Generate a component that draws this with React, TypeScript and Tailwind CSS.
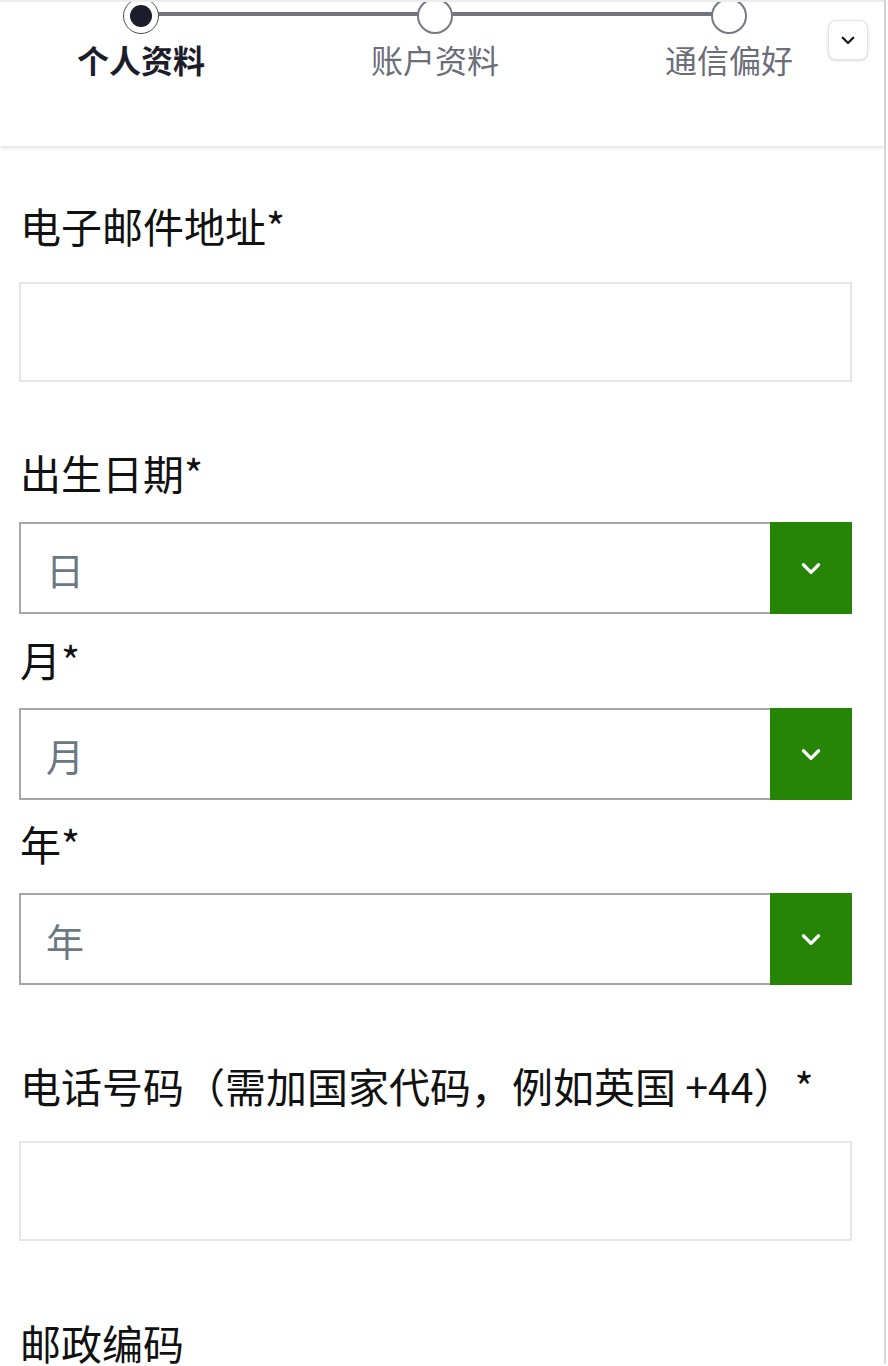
import React from 'react';

const steps = [
  { label: '个人资料', active: true },
  { label: '账户资料', active: false },
  { label: '通信偏好', active: false },
];

function Chevron({ className }: { className?: string }) {
  return (
    <svg viewBox="0 0 24 24" className={className} fill="none" stroke="currentColor" strokeWidth={3} strokeLinecap="round" strokeLinejoin="round">
      <path d="M5 9l7 7 7-7" />
    </svg>
  );
}

function Stepper() {
  return (
    <div className="relative h-[148px] bg-white shadow-[0_2px_4px_rgba(0,0,0,0.12)] z-10">
      <div className="relative ml-[-6px] w-[882px] -mt-[2px]">
        <div className="absolute left-[147px] top-[14px] h-[4px] w-[589px] bg-[#737480]" />
        <div className="grid grid-cols-3">
          {steps.map((s) => (
            <div key={s.label} className="relative flex flex-col items-center">
              {s.active ? (
                <div className="flex h-[36px] w-[36px] items-center justify-center rounded-full border-[1.5px] border-[#4a4b55] bg-white">
                  <div className="h-[22px] w-[22px] rounded-full bg-[#1c1d2b]" />
                </div>
              ) : (
                <div className="h-[36px] w-[36px] rounded-full border-2 border-[#767885] bg-white" />
              )}
              <div
                className={
                  'mt-[1px] text-[32px] leading-[48px] ' +
                  (s.active ? 'font-bold text-[#1c1d2b]' : 'text-[#6b6d79]')
                }
              >
                {s.label}
              </div>
            </div>
          ))}
        </div>
      </div>
      <button className="absolute left-[828px] top-[22px] flex h-[40px] w-[40px] items-center justify-center rounded-[8px] border border-[#e4e4e4] bg-white shadow-[0_1px_3px_rgba(0,0,0,0.15)]">
        <Chevron className="h-[18px] w-[18px] text-[#111]" />
      </button>
    </div>
  );
}

function Label({ text, className }: { text: string; className?: string }) {
  return <div className={'text-[41px] leading-[48px] text-[#111] ' + (className ?? '')}>{text}</div>;
}

function TextInput({ className }: { className?: string }) {
  return <div className={'h-[100px] w-[833px] border-2 border-[#e6e6ea] bg-white ' + (className ?? '')} />;
}

function Select({ placeholder, className }: { placeholder: string; className?: string }) {
  return (
    <div className={'flex h-[92px] w-[833px] ' + (className ?? '')}>
      <div className="flex flex-1 items-center border-2 border-r-0 border-[#a6a6a6] pl-[25px] text-[38px] text-[#6c7784]">
        {placeholder}
      </div>
      <div className="flex w-[82px] items-center justify-center bg-[#268506]">
        <Chevron className="h-[26px] w-[26px] text-white" />
      </div>
    </div>
  );
}

export default function App() {
  return (
    <div
      className="relative h-[1366px] w-[888px] overflow-hidden bg-white"
      style={{ fontFamily: '"Noto Sans CJK SC", "Noto Sans", sans-serif' }}
    >
      <div className="h-[1366px] w-[886px] border-r-2 border-[#dadada]">
        <div className="relative">
          <div className="absolute left-0 top-0 z-20 h-[4px] w-full bg-[#ececec]" />
          <Stepper />
        </div>
        <div className="flex flex-col pl-[19px]">
          <Label text="电子邮件地址*" className="mt-[55px] pl-[1px]" />
          <TextInput className="mt-[33px]" />
          <Label text="出生日期*" className="mt-[66px] pl-[1px]" />
          <Select placeholder="日" className="mt-[26px]" />
          <Label text="月*" className="mt-[21px] pl-[1px]" />
          <Select placeholder="月" className="mt-[25px]" />
          <Label text="年*" className="mt-[19px] pl-[1px]" />
          <Select placeholder="年" className="mt-[26px]" />
          <Label text="电话号码（需加国家代码，例如英国 +44）*" className="mt-[76px] pl-[1px]" />
          <TextInput className="mt-[32px]" />
          <Label text="邮政编码" className="mt-[77px] pl-[1px]" />
        </div>
      </div>
    </div>
  );
}
